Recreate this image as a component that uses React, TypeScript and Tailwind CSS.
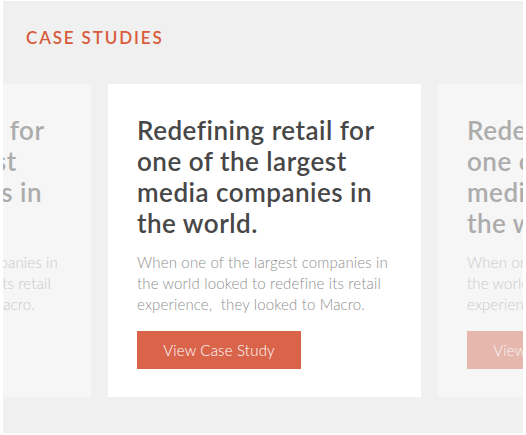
const slides = [0, 1, 2];

function CaseCard({ active }: { active: boolean }) {
  return (
    <div
      className={
        "w-[313px] h-[313px] shrink-0 bg-white pl-[29px] pr-[24px] pt-[31px] " +
        (active ? "" : "opacity-40")
      }
    >
      <h3 className="text-[26px] leading-[31px] font-semibold text-[#474747] tracking-[0.5px] pr-[8px]">
        Redefining retail for one of the largest media companies in the world.
      </h3>
      <p className="mt-[13px] text-[15px] leading-[21px] font-light text-[#8f8f8f] tracking-[0.15px]">
        When one of the largest companies in the world looked to redefine its retail experience,&nbsp; they looked to Macro.
      </p>
      <button className="mt-[16px] w-[164px] h-[38px] bg-[#d9644a] text-white text-[15px] font-light tracking-[0.2px]">
        View Case Study
      </button>
    </div>
  );
}

export default function App() {
  return (
    <div
      className="w-[526px] h-[435px] bg-white pl-[3px] pr-[3px] pt-[1px] pb-[2px]"
      style={{ fontFamily: "Lato, 'Noto Sans', sans-serif" }}
    >
      <div className="h-full bg-[#eff0ef] overflow-hidden">
        <h2 className="pl-[23px] pt-[26px] text-[17px] leading-[22px] font-semibold tracking-[0.11em] text-[#d95b3b]">
          CASE STUDIES
        </h2>
        <div className="mt-[35px] flex gap-[17px] ml-[-225px]">
          {slides.map((i) => (
            <CaseCard key={i} active={i === 1} />
          ))}
        </div>
      </div>
    </div>
  );
}
